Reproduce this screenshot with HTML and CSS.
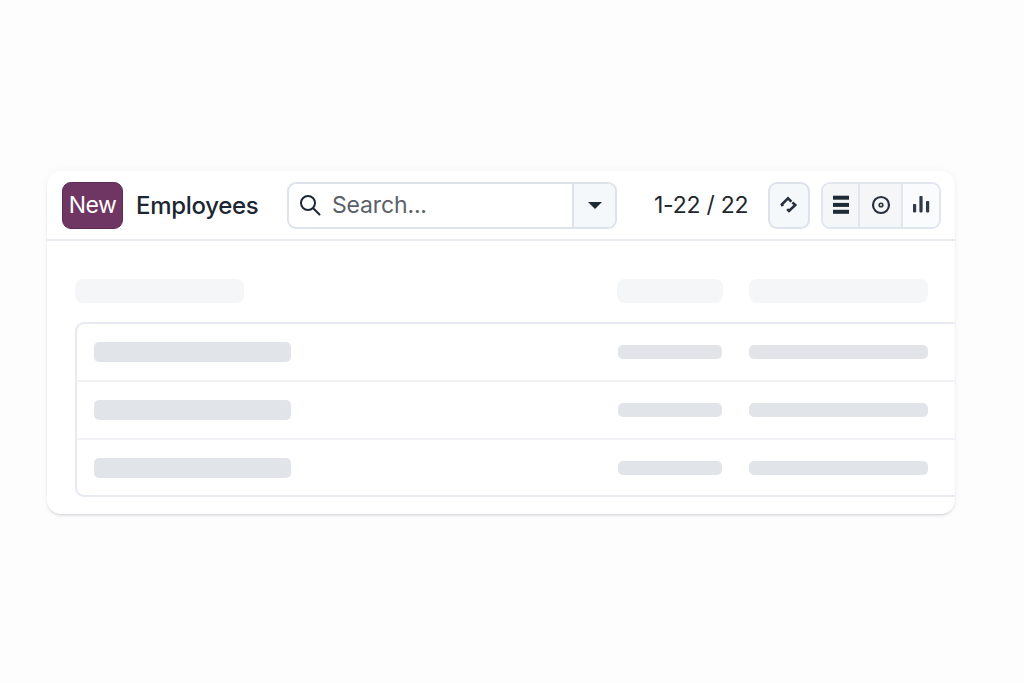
FILE: index.html
```html
<!DOCTYPE html>
<html lang="en">
<head>
<meta charset="utf-8">
<title>Employees</title>
<link rel="stylesheet" href="styles.css">
</head>
<body>
<main class="card">
  <header class="toolbar">
    <button class="btn-new">New</button>
    <h1 class="title">Employees</h1>
    <div class="search">
      <div class="search-field">
        <svg class="search-icon" width="24" height="24" viewBox="0 0 24 24" fill="none" stroke="#1f2933" stroke-width="2" stroke-linecap="round"><circle cx="10" cy="10" r="7"/><path d="M15.2 15.2l6.3 6.3"/></svg>
        <span class="search-text">Search...</span>
      </div>
      <div class="search-drop"><span class="caret"></span></div>
    </div>
    <span class="count">1-22 / 22</span>
    <button class="btn-sort">
      <svg width="18" height="18" viewBox="0 0 18 18" fill="none" stroke="#27313d" stroke-width="2.6"><path d="M2.8 10.2L1.8 8.5 8 2.3 11.4 5.7"/><path d="M12.4 6.4L15.3 9 9 15 7.2 13.2"/></svg>
    </button>
    <div class="views">
      <div class="view view-a">
        <svg width="18" height="20" viewBox="0 0 18 20" fill="#1f2a37"><rect x="1" y="0.7" width="16" height="4"/><rect x="1" y="7.9" width="16" height="4"/><rect x="1" y="14.8" width="16" height="4"/></svg>
      </div>
      <div class="view view-b">
        <svg width="20" height="20" viewBox="0 0 20 20" fill="none" stroke="#27313d" stroke-width="2.2"><circle cx="10" cy="10" r="8"/><circle cx="10" cy="10" r="1.8" stroke-width="1.6"/></svg>
      </div>
      <div class="view view-c">
        <svg width="18" height="18" viewBox="0 0 18 18" fill="#2f3a48"><rect x="1" y="8" width="3.2" height="8.4" rx="0.8"/><rect x="7.4" y="0" width="3.2" height="16.4" rx="0.8"/><rect x="14" y="5" width="3.2" height="11.4" rx="0.8"/></svg>
      </div>
    </div>
  </header>
  <section class="content">
    <div class="skeleton-head">
      <span class="sk-h sk-h1"></span>
      <span class="sk-h sk-h2"></span>
      <span class="sk-h sk-h3"></span>
    </div>
    <div class="table">
      <div class="row"><span class="bar bar1"></span><span class="bar bar2"></span><span class="bar bar3"></span></div>
      <div class="row"><span class="bar bar1"></span><span class="bar bar2"></span><span class="bar bar3"></span></div>
      <div class="row"><span class="bar bar1"></span><span class="bar bar2"></span><span class="bar bar3"></span></div>
    </div>
  </section>
</main>
</body>
</html>
```

FILE: styles.css
```css
* { box-sizing: border-box; }
html, body { margin: 0; height: 100%; }
body {
  background: #fdfdfd;
  font-family: Inter, "Liberation Sans", sans-serif;
  padding: 171px 69px 0 47px;
  overflow: hidden;
}
.card {
  width: 908px;
  height: 343px;
  background: #fff;
  border-radius: 14px;
  box-shadow: 0 2px 3px -1px rgba(30, 41, 70, 0.2), 0 0 8px rgba(30, 41, 70, 0.04);
  overflow: hidden;
}
.toolbar {
  height: 70px;
  display: flex;
  align-items: center;
  padding: 0 14px 0 15px;
  border-bottom: 2px solid #e8ebf1;
}
.btn-new {
  width: 61px;
  height: 47px;
  background: #6f3663;
  border: 1px solid #5d2c53;
  border-radius: 9px;
  color: #fff;
  font: 400 23px Inter, "Liberation Sans", sans-serif;
  letter-spacing: -0.5px;
  padding: 0;
}
.title {
  margin: 0 0 0 13px;
  width: 151px;
  font-size: 24px;
  font-weight: 500;
  color: #1d2630;
  letter-spacing: -0.3px;
  white-space: nowrap;
}
.search {
  width: 330px;
  height: 47px;
  display: flex;
  border: 2px solid #dde2eb;
  border-radius: 9px;
  overflow: hidden;
}
.search-field {
  flex: 1;
  display: flex;
  align-items: center;
  gap: 10px;
  padding-left: 9px;
}
.search-text {
  font-size: 23px;
  color: #5b6168;
  letter-spacing: -0.15px;
}
.search-drop {
  width: 43px;
  display: flex;
  align-items: center;
  justify-content: center;
  background: #f5f8fa;
  border-left: 2px solid #dde2eb;
}
.caret {
  width: 0;
  height: 0;
  border-left: 7px solid transparent;
  border-right: 7px solid transparent;
  border-top: 7px solid #1f2933;
}
.count {
  margin-left: 37px;
  width: 114px;
  font-size: 23px;
  letter-spacing: -0.25px;
  color: #20262d;
  white-space: nowrap;
}
.btn-sort {
  width: 42px;
  height: 47px;
  display: flex;
  align-items: center;
  justify-content: center;
  padding: 0;
  background: #f5f8fa;
  border: 2px solid #dde2eb;
  border-radius: 9px;
}
.views {
  margin-left: 11px;
  width: 120px;
  height: 47px;
  display: flex;
  border: 2px solid #e1e5ed;
  border-radius: 9px;
  overflow: hidden;
}
.view {
  display: flex;
  align-items: center;
  justify-content: center;
}
.view-a { width: 35px; background: #f5f6f8; }
.view-b { width: 43px; background: #f5f6f8; border-left: 2px solid #e1e5ed; }
.view-c { flex: 1; background: #fafbfc; border-left: 2px solid #e1e5ed; }
.content {
  padding: 38px 0 0 28px;
}
.skeleton-head {
  display: flex;
  height: 24px;
}
.sk-h {
  background: #f5f6f8;
  border-radius: 8px;
}
.sk-h1 { width: 169px; }
.sk-h2 { width: 106px; margin-left: 373px; }
.sk-h3 { width: 179px; margin-left: 26px; }
.table {
  margin-top: 19px;
  width: 880px;
  height: 175px;
  border: 2px solid #e8eaf2;
  border-right: 0;
  border-radius: 9px 0 0 9px;
}
.row {
  height: 58px;
  display: flex;
  align-items: center;
  padding-left: 17px;
  border-bottom: 2px solid #f1f2f5;
}
.row:last-child { border-bottom: 0; height: 55px; }
.bar {
  display: block;
  background: #e1e4e9;
  border-radius: 5px;
}
.bar1 { width: 197px; height: 20px; }
.bar2 { width: 104px; height: 14px; margin-left: 327px; }
.bar3 { width: 179px; height: 14px; margin-left: 27px; }
```
